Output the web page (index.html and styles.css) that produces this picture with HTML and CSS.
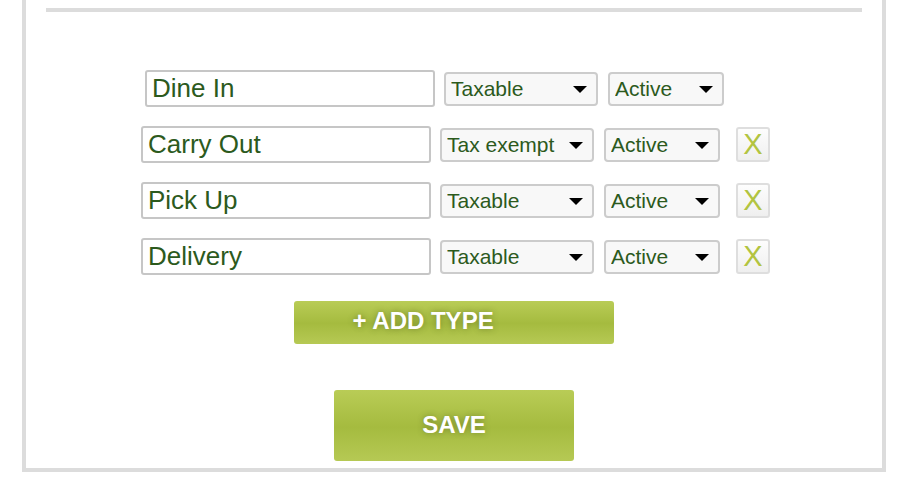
FILE: index.html
```html
<!DOCTYPE html>
<html>
<head>
<meta charset="utf-8">
<link rel="stylesheet" href="styles.css">
</head>
<body>
<div class="panel">
  <div class="rule"></div>
  <div class="rows">
    <div class="row row-first">
      <input class="name" type="text" value="Dine In">
      <span class="sel sel-tax"><select><option>Taxable</option><option>Tax exempt</option></select></span>
      <span class="sel sel-status"><select><option>Active</option><option>Inactive</option></select></span>
      <span class="spacer"></span>
    </div>
    <div class="row">
      <input class="name" type="text" value="Carry Out">
      <span class="sel sel-tax"><select><option>Tax exempt</option><option>Taxable</option></select></span>
      <span class="sel sel-status"><select><option>Active</option><option>Inactive</option></select></span>
      <button class="remove">X</button>
    </div>
    <div class="row">
      <input class="name" type="text" value="Pick Up">
      <span class="sel sel-tax"><select><option>Taxable</option><option>Tax exempt</option></select></span>
      <span class="sel sel-status"><select><option>Active</option><option>Inactive</option></select></span>
      <button class="remove">X</button>
    </div>
    <div class="row">
      <input class="name" type="text" value="Delivery">
      <span class="sel sel-tax"><select><option>Taxable</option><option>Tax exempt</option></select></span>
      <span class="sel sel-status"><select><option>Active</option><option>Inactive</option></select></span>
      <button class="remove">X</button>
    </div>
  </div>
  <div class="actions">
    <button class="btn btn-add">+ ADD TYPE</button>
    <button class="btn btn-save">SAVE</button>
  </div>
</div>
</body>
</html>
```

FILE: styles.css
```css
html, body {
  margin: 0;
  padding: 0;
  background: #ffffff;
}
body {
  font-family: "Liberation Sans", Arial, sans-serif;
}
.panel {
  box-sizing: border-box;
  width: 864px;
  margin-left: 22px;
  border: 4px solid #dcdcdc;
  border-top: none;
  padding: 8px 20px 7px;
}
.rule {
  height: 4px;
  background: #dcdcdc;
}
.rows {
  margin-top: 58px;
  display: flex;
  flex-direction: column;
  align-items: center;
  gap: 19px;
  padding-left: 3px;
}
.row {
  display: flex;
  align-items: center;
  height: 37px;
}
.row-first {
  padding-left: 8px;
}
.name {
  box-sizing: border-box;
  width: 290px;
  height: 37px;
  margin: 0 9px 0 0;
  padding: 0 5px;
  border: 2px solid #c6c6c6;
  border-radius: 3px;
  background: #fff;
  font-family: "Liberation Sans", Arial, sans-serif;
  font-size: 26px;
  color: #2c5a1d;
  outline: none;
}
.sel {
  position: relative;
  display: block;
  height: 34px;
}
.sel-tax {
  width: 154px;
  margin-right: 10px;
}
.sel-status {
  width: 116px;
}
.sel select {
  appearance: none;
  -webkit-appearance: none;
  box-sizing: border-box;
  width: 100%;
  height: 34px;
  margin: 0;
  padding: 0 0 0 5px;
  border: 2px solid #cccccc;
  border-radius: 4px;
  background: #f8f8f8;
  font-family: "Liberation Sans", Arial, sans-serif;
  font-size: 21px;
  color: #2c5a1d;
  outline: none;
}
.sel::after {
  content: "";
  position: absolute;
  right: 11px;
  top: 14px;
  width: 0;
  height: 0;
  border-left: 7px solid transparent;
  border-right: 7px solid transparent;
  border-top: 7px solid #000;
  pointer-events: none;
}
.spacer {
  display: block;
  width: 34px;
  height: 35px;
  margin-left: 16px;
}
.remove {
  box-sizing: border-box;
  width: 34px;
  height: 35px;
  margin: 0 0 0 16px;
  padding: 0;
  border: 2px solid #dedede;
  border-radius: 3px;
  background: linear-gradient(to bottom, #fdfdfd, #efefef);
  font-family: "Liberation Sans", Arial, sans-serif;
  font-size: 29px;
  line-height: 31px;
  color: #b2c440;
}
.actions {
  display: flex;
  flex-direction: column;
  align-items: center;
  margin-top: 26px;
  gap: 46px;
}
.btn {
  border: none;
  border-radius: 3px;
  background: linear-gradient(to bottom, #b9cc56 0%, #a5bb3f 52%, #b6c954 100%);
  color: #ffffff;
  font-family: "Liberation Sans", Arial, sans-serif;
  font-weight: bold;
  font-size: 24px;
  text-shadow: 0 0 6px rgba(60, 70, 20, 0.45);
  padding: 0;
}
.btn-add {
  width: 320px;
  height: 43px;
  text-align: left;
  padding-left: 59px;
  padding-bottom: 4px;
  margin-left: -1px;
}
.btn-save {
  width: 240px;
  height: 71px;
  padding-bottom: 2px;
}
```
